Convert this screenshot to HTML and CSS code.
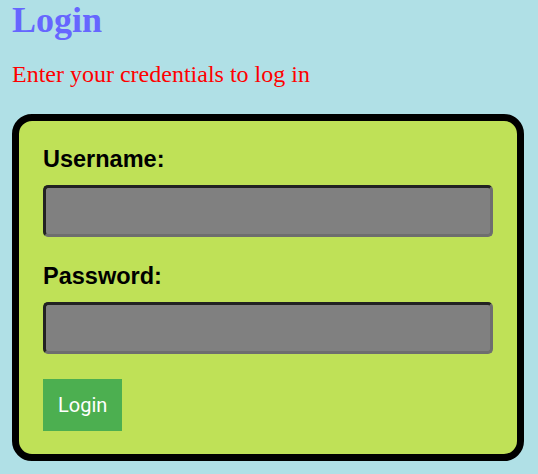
FILE: index.html
```html
<!DOCTYPE html>
<html lang="en">
<head>
<meta charset="utf-8">
<title>Login</title>
<link rel="stylesheet" href="styles.css">
</head>
<body>
  <h1 class="title">Login</h1>
  <p class="subtitle">Enter your credentials to log in</p>
  <form class="card">
    <label class="label" for="username">Username:</label>
    <input class="field" id="username" type="text">
    <label class="label" for="password">Password:</label>
    <input class="field" id="password" type="password">
    <button class="btn" type="button">Login</button>
  </form>
</body>
</html>
```
FILE: styles.css
```css
html, body {
  margin: 0;
  padding: 0;
  background: #b0e0e6;
}
body {
  padding: 0 12px;
  font-family: "Liberation Serif", "Times New Roman", serif;
}
.title {
  margin: 0;
  font-size: 36px;
  line-height: 40px;
  font-weight: bold;
  color: #6666ff;
}
.subtitle {
  margin: 21px 0 0;
  font-size: 24px;
  line-height: 27px;
  color: #ff0000;
}
.card {
  margin-top: 26px;
  width: 450px;
  padding: 25px 24px 23px;
  background: #bfe157;
  border: 7px solid #000;
  border-radius: 20px;
  display: flex;
  flex-direction: column;
  align-items: flex-start;
}
.label {
  font-family: "Liberation Sans", Arial, sans-serif;
  font-weight: bold;
  font-size: 23.5px;
  line-height: 27px;
  color: #000;
  margin-bottom: 12px;
}
.field {
  box-sizing: border-box;
  width: 450px;
  height: 52px;
  margin: 0 0 26px;
  padding: 0 10px;
  background: #808080;
  border-style: solid;
  border-width: 3px;
  border-color: #222 #6e6e6e #6e6e6e #222;
  border-radius: 5px;
  outline: none;
}
.field:last-of-type {
  margin-bottom: 25px;
}
.btn {
  height: 52px;
  padding: 0 15px;
  border: none;
  background: #4caf50;
  color: #fff;
  font-family: Roboto, "Liberation Sans", sans-serif;
  font-size: 20px;
  cursor: pointer;
}
```
